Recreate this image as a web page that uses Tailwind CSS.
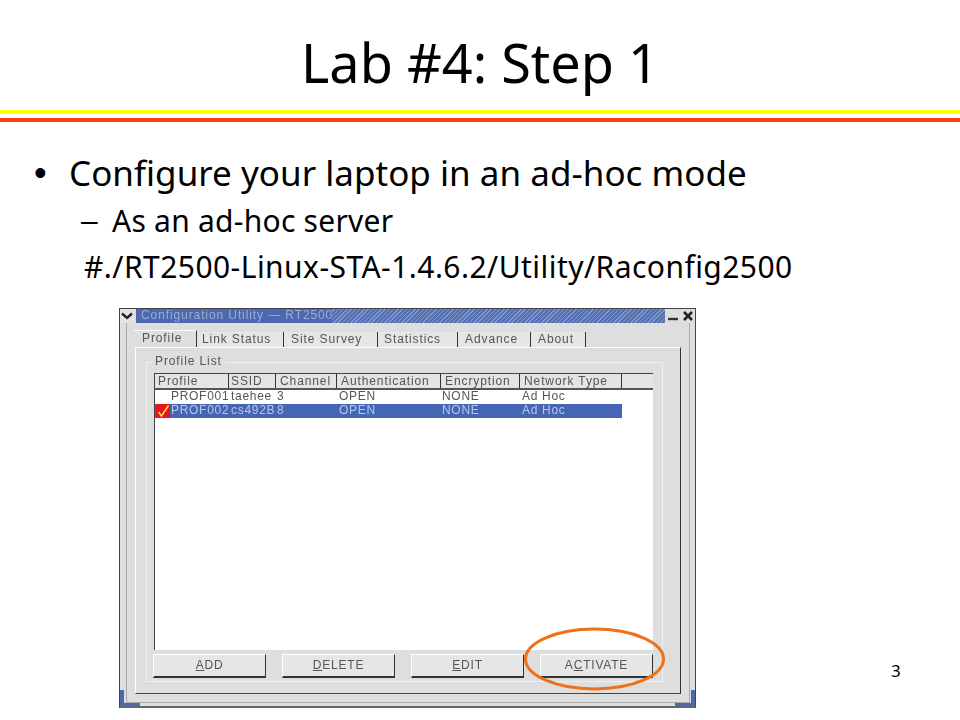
<!DOCTYPE html>
<html lang="en">
<head>
<meta charset="UTF-8">
<title>Lab #4: Step 1</title>
<script src="https://cdn.jsdelivr.net/npm/@tailwindcss/browser@4"></script>
</head>
<body class="bg-white">
<div class="relative w-[960px] h-[720px] overflow-hidden bg-white text-black font-['Noto_Sans',sans-serif]">
  <!-- slide title -->
  <h1 class="h-[110px] pt-[24px] text-center text-[54px] leading-[76px]">Lab #4: Step 1</h1>
  <div class="h-1 bg-[#ffff00]"></div>
  <div class="h-1 mt-1 bg-[#ff3c0c]"></div>

  <!-- bullets -->
  <div class="mt-[26px] ml-[34px] flex items-center h-[50px] text-[35px] leading-[50px] tracking-[0.02px]">
    <span class="w-[35px] font-['Liberation_Sans',sans-serif] text-[36px]">•</span><span>Configure your laptop in an ad-hoc mode</span>
  </div>
  <div class="ml-[81px] flex h-[46px] items-center text-[30px] leading-[44px] tracking-[0.25px]">
    <span class="w-[31px] font-['Liberation_Sans',sans-serif]">–</span><span>As an ad-hoc server</span>
  </div>
  <div class="ml-[84px] h-[46px] text-[30px] leading-[46px] tracking-[0.45px]">#./RT2500-Linux-STA-1.4.6.2/Utility/Raconfig2500</div>

  <!-- screenshot of the config window -->
  <div class="ml-[119px] mt-[18px] w-[577px] h-[400px] relative bg-[#dedede] border border-[#444] border-b-2 border-b-[#666] font-['Liberation_Sans',sans-serif] text-[12px] tracking-[0.9px] text-[#555] blur-[0.3px]">
    <!-- title bar -->
    <div class="flex h-[14px]">
      <div class="w-[14px] flex items-center justify-center bg-[#e4e4e4]">
        <svg width="12" height="8" viewBox="0 0 12 8"><path d="M1 1.5 L6 6 L11 1.5" fill="none" stroke="#222" stroke-width="2.4"/></svg>
      </div>
      <div class="ml-[2px] w-[529px] flex bg-[repeating-linear-gradient(135deg,#5470b4_0,#5470b4_2px,#8498ca_2px,#8498ca_3px)]">
        <div class="w-[196px] pl-[5px] bg-[#4c68ae] text-[#9cadd6] leading-[13px] whitespace-nowrap">Configuration Utility — RT2500</div>
      </div>
      <div class="w-[15px] flex items-center justify-center">
        <svg width="12" height="12" viewBox="0 0 12 12"><path d="M1 9 H11" stroke="#333" stroke-width="2.4"/></svg>
      </div>
      <div class="w-[15px] flex items-center justify-center">
        <svg width="12" height="12" viewBox="0 0 12 12"><path d="M2 2 L10 10 M10 2 L2 10" stroke="#222" stroke-width="2.6"/></svg>
      </div>
    </div>
    <!-- window frame -->
    <div class="pl-[15px] pt-[7px] border-l border-r border-b border-[#aaa] ml-[6px] mr-[5px] h-[380px]">
      <!-- tabs -->
      <div class="flex h-[17px] -ml-[8px] leading-[14px]">
        <div class="w-[63px] pl-[8px] bg-[#dedede] border-t border-white border-r border-r-[#333]">Profile</div>
        <div class="w-[87px] pl-[5px] mt-[2px] bg-[#e6e6e6] border-r border-r-[#333]">Link Status</div>
        <div class="w-[94px] pl-[7px] mt-[2px] bg-[#e6e6e6] border-r border-r-[#333]">Site Survey</div>
        <div class="w-[80px] pl-[6px] mt-[2px] bg-[#e6e6e6] border-r border-r-[#333]">Statistics</div>
        <div class="w-[73px] pl-[7px] mt-[2px] bg-[#e6e6e6] border-r border-r-[#333]">Advance</div>
        <div class="w-[55px] pl-[7px] mt-[2px] bg-[#e6e6e6] border-r border-r-[#333]">About</div>
      </div>
      <!-- tab panel -->
      <div class="w-[546px] h-[347px] -ml-[7px] pt-[14px] pl-[10px] border-t border-t-white border-r border-r-[#333] border-b border-b-[#444] border-l border-l-white">
        <!-- group box -->
        <div class="relative w-[517px] h-[320px] border border-[#f0f0f0] pt-[10px] pl-[7px]">
          <div class="absolute -top-[9px] left-[5px] px-[3px] bg-[#dedede] leading-[14px]">Profile List</div>
          <div class="w-[499px] h-[277px] bg-white border-l border-l-[#444]">
            <!-- header -->
            <div class="grid grid-cols-[74px_47px_61px_104px_79px_102px_31px] h-[17px] bg-[#e4e4e4] border-t border-t-[#444] border-b-2 border-b-[#555] leading-[14px]">
              <div class="pl-[3px] border-r border-r-[#333]">Profile</div>
              <div class="pl-[2px] border-r border-r-[#333]">SSID</div>
              <div class="pl-[4px] border-r border-r-[#333]">Channel</div>
              <div class="pl-[4px] border-r border-r-[#333]">Authentication</div>
              <div class="pl-[4px] border-r border-r-[#333]">Encryption</div>
              <div class="pl-[4px] border-r border-r-[#333]">Network Type</div>
              <div></div>
            </div>
            <!-- rows -->
            <div class="grid grid-cols-[74px_47px_61px_104px_79px_102px] w-[467px] h-[14px] leading-[13px] tracking-[0.7px]">
              <div class="pl-[16px]">PROF001</div><div class="pl-[2px]">taehee</div><div class="pl-[1px]">3</div><div class="pl-[2px]">OPEN</div><div class="pl-[1px]">NONE</div><div class="pl-[2px]">Ad Hoc</div>
            </div>
            <div class="grid grid-cols-[74px_47px_61px_104px_79px_102px] w-[467px] h-[14px] leading-[13px] tracking-[0.7px] bg-[#4566b4] text-[#b8c6e6]">
              <div class="flex">
                <span class="ml-[1px] w-[14px] h-[14px] bg-[#e8141c] flex items-center justify-center">
                  <svg width="14" height="14" viewBox="0 0 14 14"><path d="M2.5 8 L5.5 12 L12.5 1.5" fill="none" stroke="#ffe94a" stroke-width="1.4"/></svg>
                </span>
                <span class="ml-[1px]">PROF002</span>
              </div>
              <div class="pl-[2px]">cs492B</div><div class="pl-[1px]">8</div><div class="pl-[2px]">OPEN</div><div class="pl-[1px]">NONE</div><div class="pl-[2px]">Ad Hoc</div>
            </div>
          </div>
          <!-- buttons -->
          <div class="flex gap-[16px] mt-[4px] -ml-[1px] text-center leading-[21px] tracking-[0.8px]">
            <div class="w-[113px] h-[24px] bg-[#e6e6e6] border-t border-l border-white border-r border-b-2 border-r-[#333] border-b-[#333]"><u>A</u>DD</div>
            <div class="w-[113px] h-[24px] bg-[#e6e6e6] border-t border-l border-white border-r border-b-2 border-r-[#333] border-b-[#333]"><u>D</u>ELETE</div>
            <div class="w-[113px] h-[24px] bg-[#e6e6e6] border-t border-l border-white border-r border-b-2 border-r-[#333] border-b-[#333]"><u>E</u>DIT</div>
            <div class="w-[113px] h-[24px] bg-[#e6e6e6] border-t border-l border-white border-r border-b-2 border-r-[#333] border-b-[#333]">A<u>C</u>TIVATE</div>
          </div>
        </div>
      </div>
    </div>
    <!-- blue resize corners -->
    <div class="absolute left-0 bottom-0 w-[4px] h-[16px] bg-[#4c68ae]"></div>
    <div class="absolute left-0 bottom-0 w-[20px] h-[3px] bg-[#4c68ae]"></div>
    <div class="absolute right-0 bottom-0 w-[4px] h-[16px] bg-[#4c68ae]"></div>
    <div class="absolute right-0 bottom-0 w-[20px] h-[3px] bg-[#4c68ae]"></div>
  </div>

  <!-- highlight ellipse -->
  <svg class="absolute left-[520px] top-[624px]" width="150" height="72" viewBox="0 0 150 72"><ellipse cx="74.5" cy="35" rx="69" ry="30" fill="none" stroke="#f07018" stroke-width="3"/></svg>
  <!-- page number -->
  <div class="absolute left-[891px] top-[659px] text-[17px] leading-[24px]">3</div>
</div>
</body>
</html>
